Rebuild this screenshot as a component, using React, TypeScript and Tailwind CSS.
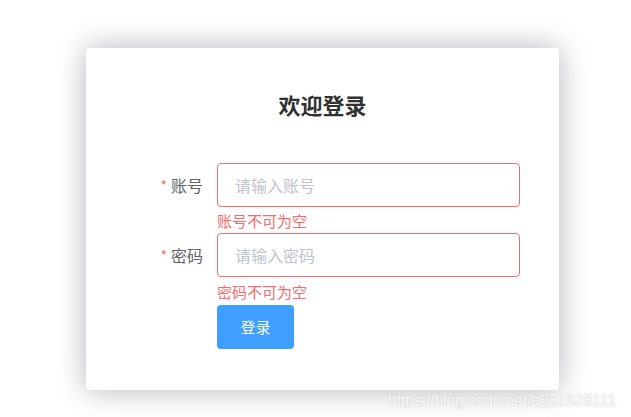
import React from "react";

const font = { fontFamily: '"Noto Sans CJK SC", "Noto Sans", sans-serif' };

function Field({ label, placeholder, error, errH }: { label: string; placeholder: string; error: string; errH: string }) {
  return (
    <div className="flex">
      <div className="w-[131px] h-[44px] flex items-center justify-end pr-[14px] text-[16px] text-[#606266]">
        <span className="text-[#f56c6c] mr-[4px] text-[14px]">*</span>
        {label}
      </div>
      <div className="flex-1 flex flex-col">
        <input
          placeholder={placeholder}
          className="h-[44px] w-full border border-[#f56c6c] rounded-[4px] pl-[17px] text-[16px] text-[#606266] placeholder:text-[#c0c4cc] outline-none bg-white"
          style={font}
        />
        <div className={`${errH} flex items-center text-[15px] leading-none text-[#f56c6c]`}>{error}</div>
      </div>
    </div>
  );
}

export default function App() {
  return (
    <div className="relative w-[631px] h-[417px] bg-white overflow-hidden" style={font}>
      <div className="ml-[86px] mt-[48px] w-[473px] h-[342px] bg-white rounded-[4px] shadow-[0_0_30px_#b3b4b8] pt-[44px] pr-[39px]">
        <h2 className="text-center pl-[39px] text-[22px] leading-[24px] font-bold text-[#303133]">欢迎登录</h2>

        <div className="mt-[47px]">
          <Field label="账号" placeholder="请输入账号" error="账号不可为空" errH="h-[26px]" />
          <Field label="密码" placeholder="请输入密码" error="密码不可为空" errH="h-[28px]" />
          <div className="pl-[131px]">
            <button className="w-[77px] h-[44px] rounded-[4px] bg-[#409eff] text-white text-[15px]">登录</button>
          </div>
        </div>
      </div>

      {/* watermark */}
      <div
        className="absolute left-[388px] top-[389px] text-[16px] text-white/90 tracking-[-0.2px]"
        style={{ fontFamily: '"Liberation Sans", Arial, sans-serif', textShadow: "0 0 2px #b8b8b8" }}
      >
        https://blog.csdn.net/a251628111
      </div>
    </div>
  );
}
